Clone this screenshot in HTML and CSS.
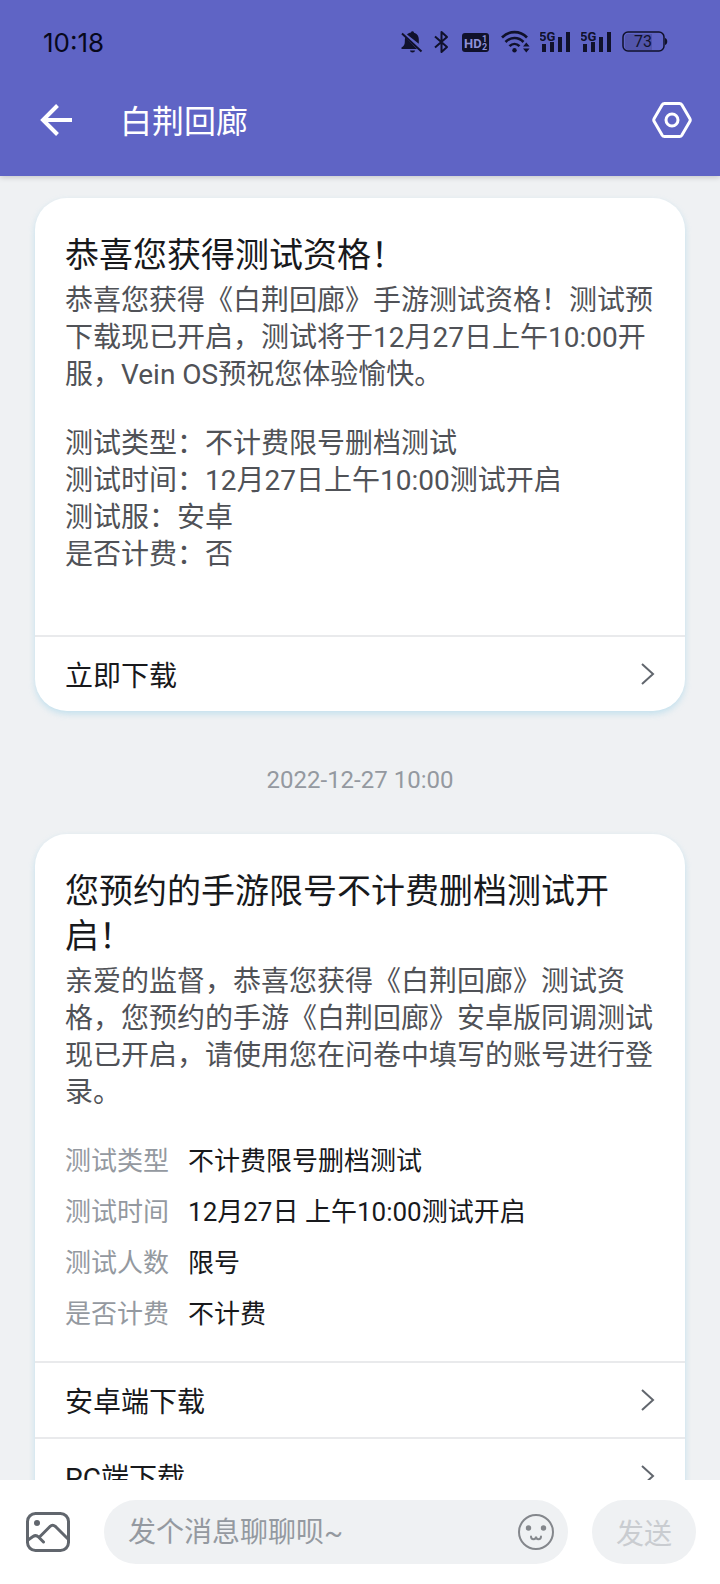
FILE: index.html
```html
<!DOCTYPE html>
<html lang="zh-CN">
<head>
  <meta charset="UTF-8" />
  <meta name="viewport" content="width=device-width, initial-scale=1.0"/>
  <title>白荆回廊</title>
  <link rel="stylesheet" href="styles.css">
</head>
<body>

  <header class="header">
    <div class="status-bar">
      <span class="clock">10:18</span>
      <div class="status-icons">
        <svg width="24" height="24" viewBox="0 0 24 24">
          <path fill="#10112b" d="M11 2.500a1.500 1.500 0 0 1 3 .3c3.400.8 4.800 3.700 4.800 6.700v4.300L7 4.500c.9-1 2.300-1.600 4-2z"/>
          <path fill="#10112b" d="M5.200 7.500L17 19H1.500v-1.500c2.300-1.300 3.300-2.700 3.300-5.500 0-1.700 0-3.200.4-4.500zM10 20.500h5a2.500 2 0 0 1-5 0z"/>
          <path stroke="#10112b" stroke-width="2" d="M2 3.500l19.500 18"/>
        </svg>
        <svg width="16" height="24" viewBox="0 0 16 24">
          <path fill="none" stroke="#10112b" stroke-width="2" stroke-linejoin="round" d="M1 6.500l12 10.500-5.500 5V2L13 7 1 17.500"/>
        </svg>
        <svg width="30" height="24" viewBox="0 0 30 24">
          <rect x="2" y="3" width="27" height="19" rx="3" fill="#10112b"/>
          <text x="4" y="18" class="hd-text">HD</text>
          <text x="22" y="12" class="hd-num">1</text>
          <text x="22" y="20" class="hd-num">2</text>
        </svg>
        <svg width="30" height="24" viewBox="0 0 30 24">
          <g fill="none" stroke="#10112b" stroke-width="2.600">
            <path d="M2 7.500C9 .3 20 .3 27 7.500"/>
            <path d="M5.500 12c5-5.300 13-5.300 18 0"/>
            <path d="M9.500 16.200c3-3 7-3 10 0"/>
          </g>
          <circle cx="14.500" cy="20.300" r="2.200" fill="#10112b"/>
          <path fill="#10112b" d="M23 16.500l3.300-4 3.300 4zM23 18.500h6.600l-3.300 4z"/>
        </svg>
        <svg width="31" height="24" viewBox="0 0 31 24">
          <text x="-1" y="11" class="net-text">5G</text>
          <path fill="#10112b" d="M2 14h4v8H2zM10 12h4v10h-4zM18 7h4v15h-4zM26 2h4v20h-4z"/>
        </svg>
        <svg width="31" height="24" viewBox="0 0 31 24">
          <text x="-1" y="11" class="net-text">5G</text>
          <path fill="#10112b" d="M2 14h4v8H2zM10 12h4v10h-4zM18 7h4v15h-4zM26 2h4v20h-4z"/>
        </svg>
        <svg width="46" height="24" viewBox="0 0 46 24">
          <path fill="#5255ab" d="M6 4h24v16H6a3 3 0 0 1-3-3V7a3 3 0 0 1 3-3z"/>
          <rect x="1" y="2" width="41" height="19" rx="5" fill="none" stroke="#10112b" stroke-width="1.500"/>
          <path fill="#10112b" d="M43 8c3 .5 3 6.500 0 7z"/>
          <text x="21" y="17" class="battery-text">73</text>
        </svg>
      </div>
    </div>

    <div class="app-bar">
      <button class="icon-button" aria-label="返回">
        <svg width="32" height="32" viewBox="0 0 32 32" fill="none" stroke="#fff" stroke-width="4">
          <path d="M17.500 1.500L3 16l14.500 14.500M3 16h29"/>
        </svg>
      </button>
      <h1 class="app-title">白荆回廊</h1>
      <button class="icon-button" aria-label="设置">
        <svg width="40" height="40" viewBox="0 0 40 40" fill="none" stroke="#fff" stroke-width="3" stroke-linejoin="round">
          <path d="M12.500 3.500h15q1.500 0 2.300 1.300l8 13.700q.9 1.500 0 3l-8 13.700q-.8 1.300-2.300 1.300h-15q-1.500 0-2.300-1.300l-8-13.700q-.9-1.500 0-3l8-13.700q.8-1.300 2.300-1.300z"/>
          <circle cx="20" cy="20" r="6"/>
        </svg>
      </button>
    </div>
  </header>

  <main class="messages">
    <article class="card">
      <div class="card-body card-body-tall">
        <h2>恭喜您获得测试资格！</h2>
        <p>恭喜您获得《白荆回廊》手游测试资格！测试预下载现已开启，测试将于12月27日上午10:00开服，Vein OS预祝您体验愉快。</p>
        <p class="details">测试类型：不计费限号删档测试<br>测试时间：12月27日上午10:00测试开启<br>测试服：安卓<br>是否计费：否</p>
      </div>
      <a class="card-link" href="#">
        立即下载
        <svg width="14" height="22" viewBox="0 0 14 22"><path d="M1 1l11 10L1 21"/></svg>
      </a>
    </article>

    <time class="date">2022-12-27 10:00</time>

    <article class="card">
      <div class="card-body">
        <h2>您预约的手游限号不计费删档测试开启！</h2>
        <p>亲爱的监督，恭喜您获得《白荆回廊》测试资格，您预约的手游《白荆回廊》安卓版同调测试现已开启，请使用您在问卷中填写的账号进行登录。</p>
        <dl class="facts">
          <dt>测试类型</dt><dd>不计费限号删档测试</dd>
          <dt>测试时间</dt><dd>12月27日 上午10:00测试开启</dd>
          <dt>测试人数</dt><dd>限号</dd>
          <dt>是否计费</dt><dd>不计费</dd>
        </dl>
      </div>
      <a class="card-link" href="#">
        安卓端下载
        <svg width="14" height="22" viewBox="0 0 14 22"><path d="M1 1l11 10L1 21"/></svg>
      </a>
      <a class="card-link" href="#">
        PC端下载
        <svg width="14" height="22" viewBox="0 0 14 22"><path d="M1 1l11 10L1 21"/></svg>
      </a>
    </article>
  </main>

  <form class="composer">
    <button type="button" class="icon-button" aria-label="图片">
      <svg width="44" height="40" viewBox="0 0 44 40" fill="none" stroke="#61666d" stroke-width="3" stroke-linecap="round" stroke-linejoin="round">
        <rect x="1.500" y="1.500" width="41" height="37" rx="8"/>
        <circle cx="11" cy="11" r="3" fill="#61666d" stroke="none"/>
        <path d="M2 28l5-3.500q3-2 5.500.5l5 5M13 25.500l11-11q2.500-2.500 5.500 0L42 27"/>
      </svg>
    </button>
    <div class="message-box">
      <input type="text" aria-label="消息" placeholder="发个消息聊聊呗~" />
      <button type="button" class="icon-button" aria-label="表情">
        <svg width="36" height="36" viewBox="0 0 36 36" fill="none" stroke="#84878c" stroke-width="2" stroke-linecap="round">
          <circle cx="18" cy="18" r="17"/>
          <circle cx="10.500" cy="14" r="2.700" fill="#84878c" stroke="none"/>
          <circle cx="25.500" cy="14" r="2.700" fill="#84878c" stroke="none"/>
          <path d="M13 22.500c0 3.500 5 3.500 5 0 0 3.500 5 3.500 5 0"/>
        </svg>
      </button>
    </div>
    <button type="submit" class="send-button">发送</button>
  </form>

</body>
</html>
```
FILE: styles.css
```css
* {
  box-sizing: border-box;
  margin: 0;
  padding: 0;
}

body {
  display: flex;
  flex-direction: column;
  height: 100vh;
  overflow: hidden;
  background-color: #eff1f3;
  color: #18191c;
  font-family: Roboto, 'Noto Sans CJK SC', sans-serif;
}

svg {
  display: block;
  flex: none;
}

button,
input {
  border: none;
  background: none;
  font: inherit;
}

/* Header */
.header {
  flex: none;
  background-color: #5f64c5;
  box-shadow: 0 1px 6px rgba(0, 0, 0, 0.2);
}

.status-bar {
  display: flex;
  justify-content: space-between;
  align-items: center;
  height: 64px;
  padding: 20px 52px 0 43px;
}

.clock {
  color: #07081c;
  font-family: Inter, sans-serif;
  font-size: 26px;
}

.status-icons {
  display: flex;
  align-items: center;
  gap: 10px;
}

.status-icons text {
  font-family: Roboto, sans-serif;
  font-weight: bold;
  fill: #10112b;
}

.status-icons .hd-text {
  font-size: 13px;
  fill: #8d90d8;
}

.status-icons .hd-num {
  font-size: 9px;
  fill: #8d90d8;
}

.status-icons .net-text {
  font-size: 13px;
}

.status-icons .battery-text {
  font-size: 16px;
  font-weight: 400;
  text-anchor: middle;
}

.app-bar {
  display: flex;
  align-items: center;
  height: 112px;
  padding: 0 28px 0 40px;
}

.app-title {
  flex: 1;
  padding: 0 0 2px 48px;
  color: #fff;
  font-size: 32px;
  font-weight: 400;
}

.icon-button {
  flex: none;
  cursor: pointer;
}

/* Messages */
.messages {
  flex: 1;
  min-height: 0;
  overflow: hidden;
  padding: 22px 35px 0;
}

.card {
  border-radius: 32px;
  background-color: #fff;
  box-shadow: 0 3px 6px rgba(130, 200, 230, 0.4);
}

.card-body {
  padding: 35px 30px 21px;
}

.card-body-tall {
  padding-bottom: 62px;
}

.card h2 {
  margin-bottom: 4px;
  font-size: 34px;
  font-weight: 400;
  line-height: 45px;
}

.card p {
  color: #505257;
  font-size: 28px;
  line-height: 37px;
}

.card .details {
  margin-top: 32px;
}

.facts {
  display: grid;
  grid-template-columns: auto 1fr;
  column-gap: 19px;
  margin-top: 25px;
  font-size: 26px;
  line-height: 51px;
}

.facts dt {
  color: #9499a0;
}

.card-link {
  display: flex;
  justify-content: space-between;
  align-items: center;
  height: 76px;
  padding: 0 30px;
  border-top: 2px solid #e9eaec;
  color: #18191c;
  font-size: 28px;
  text-decoration: none;
}

.card-link path {
  fill: none;
  stroke: #61666d;
  stroke-width: 2;
}

.date {
  display: block;
  padding: 54px 0 38px;
  color: #9499a0;
  font-size: 24px;
  line-height: 31px;
  text-align: center;
}

/* Composer */
.composer {
  display: flex;
  flex: none;
  align-items: center;
  gap: 24px;
  height: 104px;
  padding: 0 24px 0 26px;
  background-color: #fff;
}

.message-box {
  display: flex;
  flex: 1;
  align-items: center;
  height: 64px;
  margin-left: 10px;
  padding: 0 14px 0 24px;
  border-radius: 32px;
  background-color: #eff1f3;
}

.message-box input {
  flex: 1;
  min-width: 0;
  font-size: 28px;
  outline: none;
}

.message-box input::placeholder {
  color: #9499a0;
}

.send-button {
  width: 104px;
  height: 64px;
  border-radius: 32px;
  background-color: #eff1f3;
  color: #c9ccd0;
  font-size: 28px;
}
```
